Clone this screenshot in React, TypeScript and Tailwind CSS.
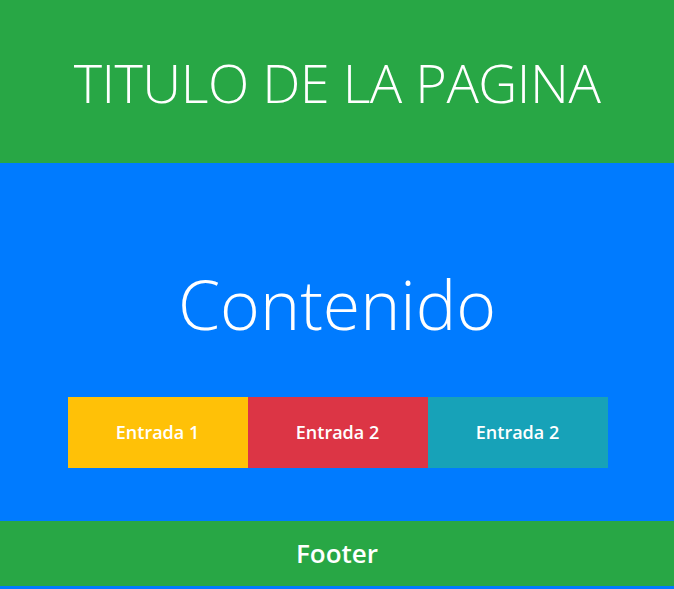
import React from 'react';

const entries = [
  { label: 'Entrada 1', bg: 'bg-[#ffc107]' },
  { label: 'Entrada 2', bg: 'bg-[#dc3545]' },
  { label: 'Entrada 2', bg: 'bg-[#17a2b8]' },
];

export default function App() {
  return (
    <div className="min-h-screen bg-[#007bff] text-white font-['Open_Sans',sans-serif]">
      {/* Header */}
      <header className="h-[163px] bg-[#28a745] flex items-center justify-center">
        <h1 className="text-[54px] font-light leading-none tracking-[-0.5px]">TITULO DE LA PAGINA</h1>
      </header>

      {/* Contenido */}
      <main className="h-[358px] flex flex-col items-center">
        <h2 className="mt-[107px] text-[68px] font-light leading-none">Contenido</h2>
        <div className="mt-[59px] ml-[1px] flex w-[540px]">
          {entries.map((e, i) => (
            <div key={i} className={`${e.bg} flex-1 h-[71px] flex items-center justify-center text-[18px] font-semibold`}>
              {e.label}
            </div>
          ))}
        </div>
      </main>

      {/* Footer */}
      <footer className="h-[65px] bg-[#28a745] flex items-center justify-center">
        <span className="text-[26px] font-semibold">Footer</span>
      </footer>
    </div>
  );
}
